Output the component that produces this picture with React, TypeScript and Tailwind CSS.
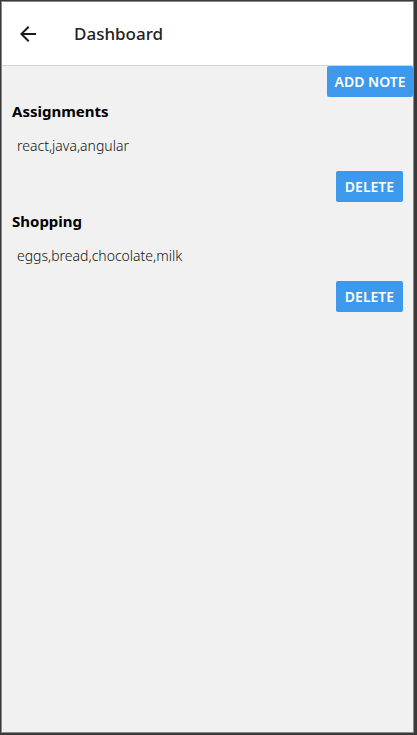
import React from "react";

const notes = [
  { title: "Assignments", body: "react,java,angular" },
  { title: "Shopping", body: "eggs,bread,chocolate,milk" },
];

export default function App() {
  return (
    <div className="w-[417px] h-[735px] bg-[#3a3a3a] pt-[1px] pl-[1px] pr-[3px] pb-[2px]">
      <div
        className="h-full border border-[#8a8a8a] bg-[#f1f1f1] flex flex-col"
        style={{ fontFamily: '"Noto Sans", "Open Sans", sans-serif' }}
      >
        <div className="h-[64px] shrink-0 bg-white border-b border-[#d4d4d4] flex items-center">
          <svg width="24" height="24" viewBox="0 0 24 24" className="ml-[14px] text-[#1a1a1a]">
            <path
              fill="currentColor"
              d="M20 11H7.83l5.59-5.59L12 4l-8 8 8 8 1.41-1.41L7.83 13H20v-2z"
            />
          </svg>
          <div className="ml-[34px] text-[17px] font-medium text-[#222] leading-none">Dashboard</div>
        </div>
        <div className="flex flex-col">
          <div className="flex justify-end">
            <button className="h-[31px] w-[86px] bg-[#3c99ec] text-white text-[14px] font-semibold rounded-[2px]">
              ADD NOTE
            </button>
          </div>
          <div className="flex flex-col pt-[4px]">
            {notes.map((n) => (
              <div key={n.title} className="flex flex-col pb-[9px]">
                <div className="pl-[10px] text-[15px] font-bold leading-[20px] text-black">{n.title}</div>
                <div className="pl-[15px] mt-[15px] text-[14px] font-light leading-[20px] text-[#111]">
                  {n.body}
                </div>
                <div className="flex justify-end pr-[10px] mt-[15px]">
                  <button className="h-[31px] w-[67px] bg-[#3c99ec] text-white text-[14px] font-semibold rounded-[2px]">
                    DELETE
                  </button>
                </div>
              </div>
            ))}
          </div>
        </div>
      </div>
    </div>
  );
}
